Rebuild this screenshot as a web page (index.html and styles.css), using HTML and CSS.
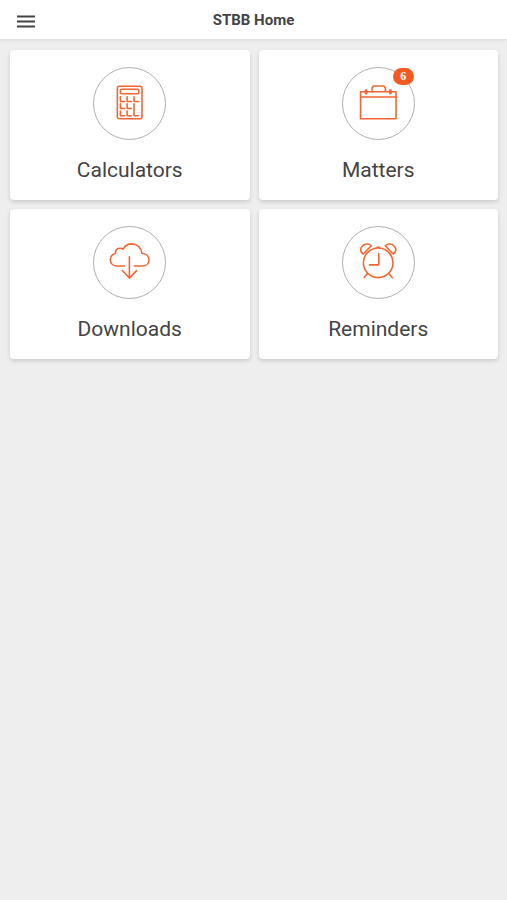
FILE: index.html
```
<!DOCTYPE html>
<html lang="en">
<head>
    <meta charset="UTF-8">
    <meta name="viewport" content="width=device-width, initial-scale=1.0">
    <title>STBB Home</title>
    <link rel="stylesheet" href="styles.css">
</head>
<body>
    <header class="navbar">
        <button type="button" class="menu-button" aria-label="Menu">
            <svg width="20" height="14" viewBox="0 0 20 14">
                <path d="M1 2.5h18M1 7.5h18M1 12.5h18"/>
            </svg>
        </button>
        <h1>STBB Home</h1>
    </header>

    <main class="tiles">
        <a class="tile" href="#calculators">
            <span class="icon">
                <svg viewBox="0 0 72 72">
                    <rect x="23.7" y="18.5" width="25" height="33" rx="2"/>
                    <rect x="26.8" y="21.5" width="18.6" height="4.6" rx="1"/>
                    <path d="M26.8 29.3v4.6h4.2M33.6 29.3v4.6h4.2M40.6 29.3v4.6h4.4"/>
                    <path d="M26.8 36.4v4.6h4.2M33.6 36.4v4.6h4.2"/>
                    <path d="M26.8 43.6v4.8h4.2M33.6 43.6v4.8h4.2M40.6 36.4v12h4.4"/>
                </svg>
            </span>
            <span class="label">Calculators</span>
        </a>

        <a class="tile" href="#matters">
            <span class="icon">
                <svg viewBox="0 0 72 72">
                    <rect x="17.8" y="24" width="36" height="27.5"/>
                    <path d="M17.8 29.4h36M29.5 24v-4l1.5-1.8h10.5l1.5 1.8v4"/>
                    <path class="clasp" d="M23.4 23v2.4M48 23v2.4"/>
                </svg>
                <span class="badge">6</span>
            </span>
            <span class="label">Matters</span>
        </a>

        <a class="tile" href="#downloads">
            <span class="icon">
                <svg viewBox="0 0 72 72">
                    <path d="M30.8 39.6h-7.3c-4.2 0-6.9-2.8-6.9-6.4 0-3.2 2-5.7 5.1-6.4 0-3.2 2-5.2 4.8-5.2 1.2 0 2.2.3 3 .9 1.8-3.4 4.8-5.4 8.6-5.4 5.6 0 10.1 4 10.5 9.6 4.2.3 7.2 2.8 7.2 6.5s-2.7 6.4-6.6 6.4h-8.4"/>
                    <path d="M35.9 30.2v21.6M28.8 44.2l7.1 7.6 7.3-7.6"/>
                </svg>
            </span>
            <span class="label">Downloads</span>
        </a>

        <a class="tile" href="#reminders">
            <span class="icon">
                <svg viewBox="0 0 72 72">
                    <circle cx="35.7" cy="36.3" r="15"/>
                    <path d="M36.3 26.8v11.6h-9.4M34.5 20.6h2.4"/>
                    <path d="M25 47l-3.5 4.3M46.4 47l3.5 4.3"/>
                    <path d="M20.6 27.4l8-8.4c-2.6-2.4-6.6-2.2-9 .2-2.5 2.4-2.5 6.2 1 8.2z"/>
                    <path d="M50.8 27.4l-8-8.4c2.6-2.4 6.6-2.2 9 .2 2.5 2.4 2.5 6.2-1 8.2z"/>
                </svg>
            </span>
            <span class="label">Reminders</span>
        </a>
    </main>
</body>
</html>
```
FILE: styles.css
```
* {
    box-sizing: border-box;
}

body {
    margin: 0;
    background-color: #eeeeee;
    color: #444;
    font-family: Roboto, 'Liberation Sans', sans-serif;
}

.navbar {
    display: grid;
    grid-template-columns: 52px 1fr 52px;
    align-items: center;
    height: 40px;
    background-color: #fff;
    border-bottom: 1px solid #e2e2e2;
    box-shadow: 0 1px 2px rgba(0, 0, 0, 0.06);
}

.menu-button {
    display: flex;
    justify-content: center;
    padding: 9px 0 7px;
    border: none;
    background: none;
    cursor: pointer;
}

.menu-button svg {
    stroke: #444;
    stroke-width: 2;
}

h1 {
    margin: 0;
    padding-top: 1px;
    font-size: 15px;
    line-height: 20px;
    font-weight: 700;
    text-align: center;
}

.tiles {
    display: grid;
    grid-template-columns: 1fr 1fr;
    gap: 9px;
    padding: 10px 9px 10px 10px;
}

.tile {
    display: flex;
    flex-direction: column;
    align-items: center;
    gap: 17px;
    padding: 17px 10px 16px;
    border-radius: 4px;
    background-color: #fff;
    box-shadow: 0 2px 4px rgba(0, 0, 0, 0.15);
    color: inherit;
    text-decoration: none;
}

.icon {
    position: relative;
    width: 73px;
    height: 73px;
    border: 1px solid #b0b0b0;
    border-radius: 50%;
}

.icon svg {
    display: block;
    fill: none;
    stroke: #f26532;
    stroke-width: 1.6;
    stroke-linecap: round;
    stroke-linejoin: round;
}

.icon .clasp {
    stroke-width: 3;
}

.badge {
    position: absolute;
    top: 0;
    right: 0;
    width: 21px;
    border-radius: 9px;
    background-color: #f4591f;
    color: #fff;
    font-family: 'Liberation Serif', serif;
    font-size: 12px;
    font-weight: 700;
    line-height: 17px;
    text-align: center;
}

.label {
    font-size: 21px;
    line-height: 27px;
}
```
